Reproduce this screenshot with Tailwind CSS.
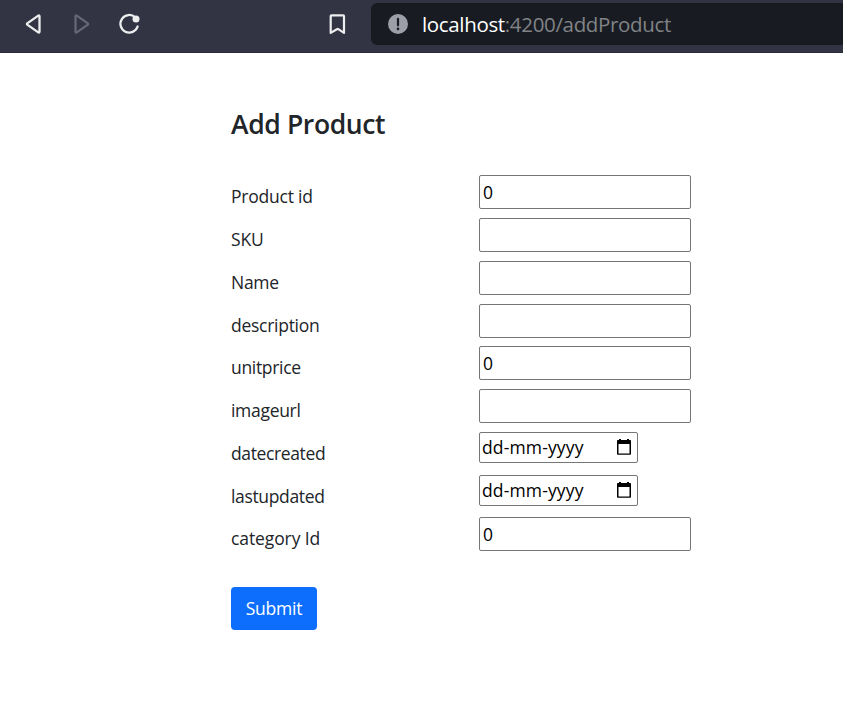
<!DOCTYPE html>
<html lang="en">
<head>
<meta charset="utf-8">
<title>Add Product</title>
<script src="https://cdn.jsdelivr.net/npm/@tailwindcss/browser@4"></script>
</head>
<body class="bg-white font-['Open_Sans','Noto_Sans',sans-serif] text-[#212529] w-[843px] h-[701px] overflow-hidden">
<header class="h-[53px] bg-[#323443] border-b border-[#2a2c3b] flex items-start pt-[3px] pl-[22px]">
  <div class="flex items-center h-[42px] w-[349px] shrink-0">
    <svg class="w-6 h-6 shrink-0" viewBox="0 0 24 24" fill="none" stroke="#ededef" stroke-width="2.300" stroke-linejoin="round"><path d="M17.500 4.200v15.600c0 .6-.7 1-1.200.6L5.200 12.600a.8.8 0 0 1 0-1.200l11.100-7.800c.5-.4 1.200 0 1.200.6z"/></svg>
    <svg class="w-6 h-6 shrink-0 ml-[23px]" viewBox="0 0 24 24" fill="none" stroke="#656774" stroke-width="2.300" stroke-linejoin="round"><path d="M6.500 4.200v15.600c0 .6.700 1 1.200.6l11.100-7.800a.8.8 0 0 0 0-1.200L7.700 3.600c-.5-.4-1.200 0-1.200.6z"/></svg>
    <svg class="w-6 h-6 shrink-0 ml-[25px]" viewBox="0 0 24 24" fill="none" stroke="#ededef" stroke-width="2.300"><path d="M17.200 5.300A8.800 8.800 0 1 0 19.600 14.500" stroke-linecap="round"/><circle cx="18" cy="7" r="3.500" fill="#ededef" stroke="none"/></svg>
    <svg class="w-6 h-6 shrink-0 ml-[183px]" viewBox="0 0 24 24" fill="none" stroke="#ededef" stroke-width="2.200" stroke-linejoin="round"><path d="M6.500 3.300h11.700c.5 0 .8.300.8.800V20.900l-5.700-3.700a1.300 1.300 0 0 0-1.400 0L5.700 20.900V4.100c0-.5.300-.8.800-.8z"/></svg>
  </div>
  <div class="flex items-center h-[42px] grow bg-[#181b22] rounded-l-[6px] pl-[17px]">
    <svg class="w-5 h-5 shrink-0" viewBox="0 0 20 20"><circle cx="10" cy="10" r="10" fill="#9c9ea8"/><path d="M10 4.800v6.500" stroke="#181b22" stroke-width="2.200" stroke-linecap="round"/><circle cx="10" cy="14.900" r="1.300" fill="#181b22"/></svg>
    <span class="ml-[14px] text-[20.500px] leading-[28px] text-[#818387] whitespace-nowrap tracking-[-0.340px]"><span class="text-white">localhost</span>:4200/addProduct</span>
  </div>
</header>
<main class="pl-[231px] pt-[53px]">
  <h1 class="text-[26.500px] leading-[36px] font-[560] tracking-[-0.370px]">Add Product</h1>
  <form class="mt-[33.300px]">
    <div class="grid grid-cols-[248px_212px] auto-rows-[42.750px] text-[17.500px] leading-[26px] font-[370]">
      <label class="pt-[8px]"><span class="tracking-[-0.220px]">Product id</span></label><div class="h-[34px] border border-[#767676] rounded-[2px] text-black flex items-center pl-[3px]">0</div>
      <label class="pt-[8px]"><span class="tracking-[-0.200px]">SKU</span></label><div class="h-[34px] border border-[#767676] rounded-[2px]"></div>
      <label class="pt-[8px]"><span class="tracking-[-0.300px]">Name</span></label><div class="h-[34px] border border-[#767676] rounded-[2px]"></div>
      <label class="pt-[8px]"><span class="tracking-[-0.270px]">description</span></label><div class="h-[34px] border border-[#767676] rounded-[2px]"></div>
      <label class="pt-[8px]"><span class="tracking-[-0.320px]">unitprice</span></label><div class="h-[34px] border border-[#767676] rounded-[2px] text-black flex items-center pl-[3px]">0</div>
      <label class="pt-[8px]"><span class="tracking-[-0.300px]">imageurl</span></label><div class="h-[34px] border border-[#767676] rounded-[2px]"></div>
      <label class="pt-[8px]"><span class="tracking-[-0.370px]">datecreated</span></label>
      <div class="w-[159px] h-[31px] border border-[#767676] rounded-[2px] text-black flex items-center justify-between pl-[2px] pr-[5px]"><span class="tracking-[0.140px]">dd-mm-yyyy</span><svg class="w-4 h-4" viewBox="0 0 16 16"><path d="M3 0h2v1h6V0h2v1h1.200c.5 0 .8.300.8.800v13.200c0 .5-.3.800-.8.800H1.800c-.5 0-.8-.3-.8-.8V1.800c0-.5.300-.8.800-.8H3zM2.500 5v9.500h11V5z" fill="#000" fill-rule="evenodd"/></svg></div>
      <label class="pt-[8px]"><span class="tracking-[-0.340px]">lastupdated</span></label>
      <div class="w-[159px] h-[31px] border border-[#767676] rounded-[2px] text-black flex items-center justify-between pl-[2px] pr-[5px]"><span class="tracking-[0.140px]">dd-mm-yyyy</span><svg class="w-4 h-4" viewBox="0 0 16 16"><path d="M3 0h2v1h6V0h2v1h1.200c.5 0 .8.300.8.800v13.200c0 .5-.3.800-.8.800H1.800c-.5 0-.8-.3-.8-.8V1.800c0-.5.300-.8.800-.8H3zM2.500 5v9.500h11V5z" fill="#000" fill-rule="evenodd"/></svg></div>
      <label class="pt-[8px]"><span class="tracking-[-0.1px]">category Id</span></label><div class="h-[34px] border border-[#767676] rounded-[2px] text-black flex items-center pl-[3px]">0</div>
    </div>
    <button type="button" class="mt-[26.700px] w-[86px] h-[43px] rounded-[4px] bg-[#0d6efd] text-white text-[17.500px] leading-[26px] tracking-[-0.2px]">Submit</button>
  </form>
</main>
</body>
</html>
